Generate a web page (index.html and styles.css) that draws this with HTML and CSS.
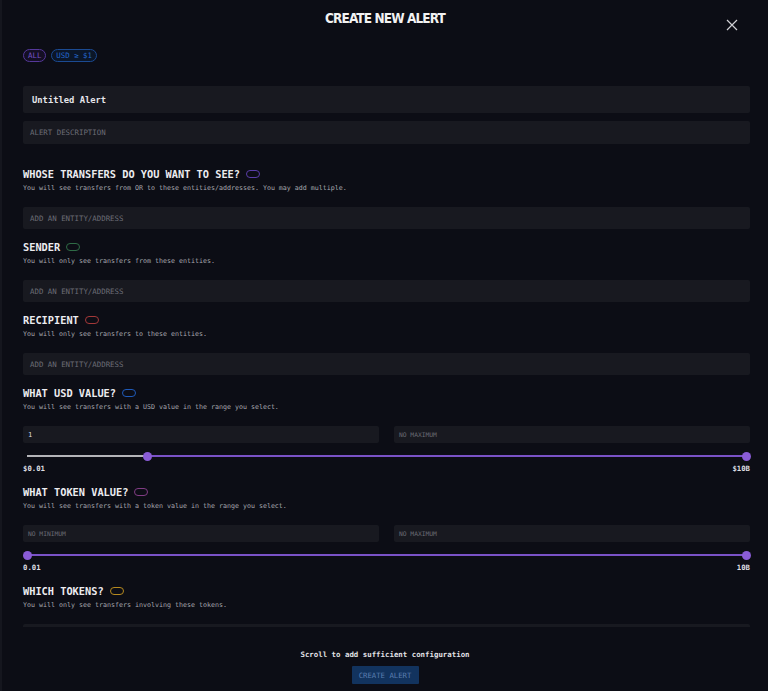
FILE: index.html
```html
<!DOCTYPE html>
<html lang="en">

<head>
    <meta charset="UTF-8">
    <meta name="viewport" content="width=device-width, initial-scale=1.0">
    <title>Create New Alert</title>
    <link rel="stylesheet" href="styles.css">
</head>

<body>
    <div class="modal">
        <div class="modal-header">
            <h1>CREATE NEW ALERT</h1>
            <button class="close" aria-label="Close">
                <svg width="12" height="12" viewBox="0 0 12 12">
                    <path d="M1 1 L11 11 M11 1 L1 11" stroke="#d0d0d4" stroke-width="1.2" fill="none" />
                </svg>
            </button>
        </div>

        <div class="modal-body">
            <div class="tags">
                <span class="tag purple">ALL</span>
                <span class="tag blue">USD ≥ $1</span>
            </div>

            <div class="field title-field">Untitled Alert</div>
            <div class="field desc-field">ALERT DESCRIPTION</div>

            <div class="section first">
                <h2>WHOSE TRANSFERS DO YOU WANT TO SEE? <span class="toggle purple"></span></h2>
                <p>You will see transfers from OR to these entities/addresses. You may add multiple.</p>
                <div class="field entity">ADD AN ENTITY/ADDRESS</div>
            </div>

            <div class="section">
                <h2>SENDER <span class="toggle green"></span></h2>
                <p>You will only see transfers from these entities.</p>
                <div class="field entity">ADD AN ENTITY/ADDRESS</div>
            </div>

            <div class="section">
                <h2>RECIPIENT <span class="toggle red"></span></h2>
                <p>You will only see transfers to these entities.</p>
                <div class="field entity">ADD AN ENTITY/ADDRESS</div>
            </div>

            <div class="section">
                <h2>WHAT USD VALUE? <span class="toggle blue"></span></h2>
                <p>You will see transfers with a USD value in the range you select.</p>
                <div class="range-inputs">
                    <div class="field small filled">1</div>
                    <div class="field small">NO MAXIMUM</div>
                </div>
                <div class="slider">
                    <div class="track"></div>
                    <div class="fill" style="left: 16.7%; right: 0;"></div>
                    <span class="thumb" style="left: 16.7%;"></span>
                    <span class="thumb" style="left: 100%;"></span>
                </div>
                <div class="range-labels"><span>$0.01</span><span>$10B</span></div>
            </div>

            <div class="section">
                <h2>WHAT TOKEN VALUE? <span class="toggle magenta"></span></h2>
                <p>You will see transfers with a token value in the range you select.</p>
                <div class="range-inputs">
                    <div class="field small">NO MINIMUM</div>
                    <div class="field small">NO MAXIMUM</div>
                </div>
                <div class="slider">
                    <div class="track"></div>
                    <div class="fill" style="left: 0; right: 0;"></div>
                    <span class="thumb" style="left: 0;"></span>
                    <span class="thumb" style="left: 100%;"></span>
                </div>
                <div class="range-labels"><span>0.01</span><span>10B</span></div>
            </div>

            <div class="section">
                <h2>WHICH TOKENS? <span class="toggle amber"></span></h2>
                <p>You will only see transfers involving these tokens.</p>
                <div class="field entity"></div>
            </div>
        </div>

        <div class="modal-footer">
            <div class="hint">Scroll to add sufficient configuration</div>
            <button class="create">CREATE ALERT</button>
        </div>
    </div>
</body>

</html>
```

FILE: styles.css
```css
body {
    margin: 0;
    background: #0c0d15;
    font-family: "DejaVu Sans Mono", "Liberation Mono", monospace;
    color: #e4e4e8;
}

.modal {
    height: 691px;
    display: flex;
    flex-direction: column;
    border-left: 2px solid #15161e;
    box-sizing: border-box;
    overflow: hidden;
}

.modal-header {
    position: relative;
    height: 38px;
    padding-top: 11px;
    box-sizing: border-box;
    text-align: center;
}

.modal-header h1 {
    margin: 0;
    font-family: "DejaVu Sans Condensed", "DejaVu Sans", sans-serif;
    font-weight: bold;
    font-size: 13.5px;
    line-height: 14px;
    letter-spacing: -0.9px;
    color: #f2f2f2;
}

.close {
    position: absolute;
    top: 19px;
    right: 30px;
    padding: 0;
    border: 0;
    background: none;
    width: 12px;
    height: 12px;
}

.close svg {
    display: block;
}

.modal-body {
    flex: 1;
    overflow: hidden;
    padding: 11px 18px 0 21px;
}

.tags {
    display: flex;
    gap: 5px;
}

.tag {
    height: 13px;
    line-height: 11px;
    padding: 0 4px;
    border: 1px solid;
    border-radius: 7px;
    box-sizing: border-box;
    font-size: 7.4px;
}

.tag.purple {
    border-color: #55389a;
    color: #7652c4;
    background: #140f24;
}

.tag.blue {
    border-color: #1b4a92;
    color: #2466cc;
    background: #0b1628;
}

.field {
    background: #181920;
    border-radius: 2px;
    box-sizing: border-box;
    padding-left: 7px;
    color: #6c6d76;
    font-size: 7.4px;
    display: flex;
    align-items: center;
}

.title-field {
    margin-top: 24px;
    height: 27px;
    padding-left: 9px;
    color: #e6e6ea;
    font-size: 8.8px;
    font-weight: bold;
}

.desc-field {
    margin-top: 8px;
    height: 23px;
}

.entity {
    margin-top: 14px;
    height: 22px;
}

.section {
    margin-top: 11px;
}

.section.first {
    margin-top: 23px;
}

.section h2 {
    margin: 0;
    font-size: 10.3px;
    line-height: 14px;
    font-weight: bold;
    display: flex;
    align-items: center;
    gap: 6px;
    color: #ececf0;
}

.section p {
    margin: 2px 0 0;
    font-size: 6.65px;
    line-height: 10px;
    color: #a6a7ae;
}

.toggle {
    width: 14px;
    height: 8px;
    border: 1.3px solid;
    border-radius: 5px;
    box-sizing: border-box;
}

.toggle.purple { border-color: #5a3ea8; }
.toggle.green { border-color: #2f6b46; }
.toggle.red { border-color: #a33838; }
.toggle.blue { border-color: #1f5ab8; }
.toggle.magenta { border-color: #813c84; }
.toggle.amber { border-color: #b5891f; }

.range-inputs {
    margin-top: 14px;
    display: grid;
    grid-template-columns: 1fr 1fr;
    gap: 15px;
}

.field.small {
    height: 17px;
    padding-left: 5px;
    font-size: 6.3px;
}

.field.small.filled {
    color: #dcdce0;
    font-size: 7px;
}

.slider {
    position: relative;
    height: 10px;
    margin: 8px 4px 0;
}

.slider .track,
.slider .fill {
    position: absolute;
    top: 4px;
    height: 1.5px;
}

.slider .track {
    left: 0;
    right: 0;
    background: #b4b4b8;
}

.slider .fill {
    background: #7a52c7;
}

.thumb {
    position: absolute;
    top: 0.5px;
    width: 9px;
    height: 9px;
    margin-left: -4.5px;
    border-radius: 50%;
    background: #8a5cd6;
}

.range-labels {
    margin-top: 3px;
    display: flex;
    justify-content: space-between;
    font-size: 7.3px;
    line-height: 10px;
    font-weight: bold;
    color: #dedee2;
}

.modal-footer {
    height: 64px;
    padding-top: 23px;
    box-sizing: border-box;
    display: flex;
    flex-direction: column;
    align-items: center;
    background: #0c0d15;
}

.hint {
    font-size: 7.4px;
    line-height: 10px;
    font-weight: bold;
    color: #e2e2e6;
}

.create {
    margin-top: 6px;
    width: 67px;
    height: 18px;
    padding: 0;
    border: 0;
    border-radius: 1px;
    background: #12335e;
    color: #5a7db0;
    font-family: "DejaVu Sans Mono", "Liberation Mono", monospace;
    font-size: 7.3px;
}
```
